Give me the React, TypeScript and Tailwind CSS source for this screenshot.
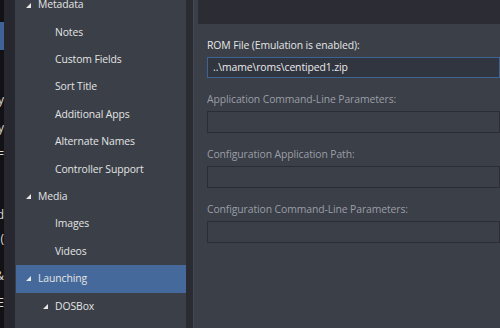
import React from "react";

const font = { fontFamily: '"Open Sans", "Noto Sans", sans-serif' };

type Row = { label: string; level: 0 | 1 | 2; expanded?: boolean; selected?: boolean };

const rows: Row[] = [
  { label: "Metadata", level: 0, expanded: true },
  { label: "Notes", level: 1 },
  { label: "Custom Fields", level: 1 },
  { label: "Sort Title", level: 1 },
  { label: "Additional Apps", level: 1 },
  { label: "Alternate Names", level: 1 },
  { label: "Controller Support", level: 1 },
  { label: "Media", level: 0, expanded: true },
  { label: "Images", level: 1 },
  { label: "Videos", level: 1 },
  { label: "Launching", level: 0, expanded: true, selected: true },
  { label: "DOSBox", level: 2, expanded: true },
];

function Expander() {
  return (
    <svg width="5" height="5" viewBox="0 0 5 5" className="shrink-0">
      <path d="M0 5 L5 5 L5 0 Z" fill="#e8e8e8" />
    </svg>
  );
}

function TreeRow({ row }: { row: Row }) {
  const pad = row.level === 0 ? "pl-[10px]" : row.level === 2 ? "pl-[27px]" : "pl-[39px]";
  return (
    <div className={`flex h-[27.4px] items-center ${pad} ${row.selected ? "bg-[#44699a]" : ""}`}>
      {row.expanded && <Expander />}
      <span className={`${row.expanded ? "ml-[7px]" : ""} text-[10.4px] tracking-[-0.1px] text-[#e4e4e4]`}>
        {row.label}
      </span>
    </div>
  );
}

function Field({ label, value, active, first }: { label: string; value?: string; active?: boolean; first?: boolean }) {
  return (
    <div className={first ? "" : "mt-[14px]"}>
      <div
        className={`h-[15px] text-[10.4px] leading-[15px] tracking-[-0.1px] ${
          active ? "text-[#e6e6e6]" : "text-[#9a9ea6]"
        }`}
      >
        {label}
      </div>
      <div
        className={`mt-[4px] flex items-center border px-[5px] text-[10.4px] tracking-[-0.1px] text-[#ececec] ${
          active ? "h-[21px] border-[#3f6494] bg-[#30353f]" : "h-[22px] border-[#2a2d34] bg-[#3a3f48]"
        }`}
      >
        {value}
      </div>
    </div>
  );
}

// glyph tails of the window behind, clipped at the left edge
const stripGlyphs = [
  { g: "y", top: "top-[92px]" },
  { g: "y", top: "top-[120px]" },
  { g: "=", top: "top-[146px]" },
  { g: "d", top: "top-[207px]" },
  { g: "(", top: "top-[231px]" },
  { g: "&", top: "top-[268px]" },
  { g: "E", top: "top-[295px]" },
];

export default function App() {
  return (
    <div className="flex h-[328px] w-[500px] overflow-hidden bg-[#3a3f48]" style={font}>
      <div className="relative w-[4px] shrink-0 overflow-hidden bg-[#121216]">
        <div className="absolute left-0 top-[22px] h-[28px] w-[4px] bg-[#3f6396]" />
        {stripGlyphs.map((s, i) => (
          <span key={i} className={`absolute right-0 ${s.top} text-[12px] leading-[16px] text-[#d8d8d8]`}>
            {s.g}
          </span>
        ))}
      </div>
      <div className="w-[11px] shrink-0 bg-[#26272f]" />

      {/* tree */}
      <div className="w-[171px] shrink-0 bg-[#3a3f48]">
        <div className="-mt-[8.7px] pl-[1px]">
          {rows.map((r) => (
            <TreeRow key={r.label} row={r} />
          ))}
        </div>
      </div>

      {/* splitter */}
      <div className="w-[7px] shrink-0 bg-[#2a2b33]" />
      <div className="w-[1px] shrink-0 bg-[#434a56]" />

      {/* content */}
      <div className="flex min-w-0 flex-1 flex-col pl-[4px]">
        <div className="h-[24px] bg-[#2b2c34]" />
        <div className="pl-[9px] pt-[14px]">
          <Field first active label="ROM File (Emulation is enabled):" value="..\mame\roms\centiped1.zip" />
          <Field label="Application Command-Line Parameters:" />
          <Field label="Configuration Application Path:" />
          <Field label="Configuration Command-Line Parameters:" />
        </div>
      </div>
    </div>
  );
}
